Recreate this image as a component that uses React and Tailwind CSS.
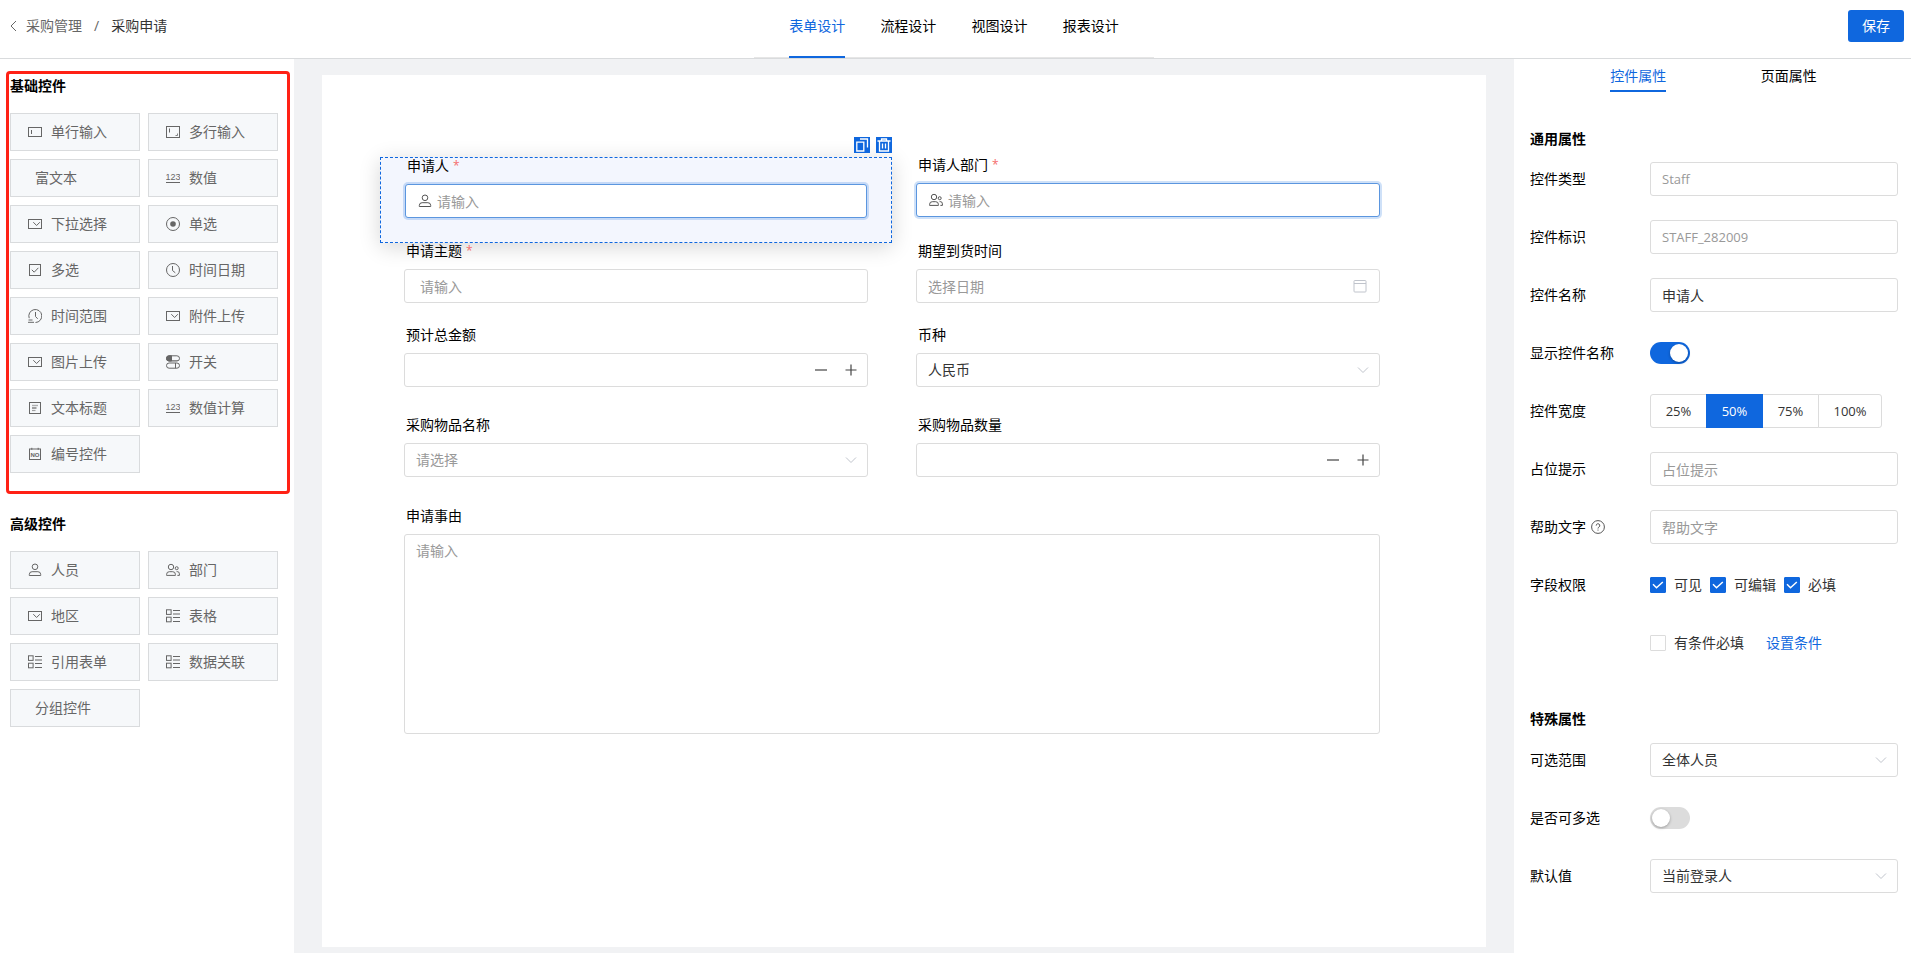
import { useState } from 'react';

const ICONS = {
  single: <><rect x="0.5" y="2.5" width="13" height="9"/><path d="M3.5 5v4"/></>,
  multi: <><rect x="0.5" y="1.5" width="13" height="11"/><path d="M3.5 3.5v4"/><path d="M9.5 10.5h2v-2" strokeWidth="0.8"/></>,
  number: <><text x="7" y="8.5" fontSize="9" textAnchor="middle" fontFamily="Liberation Sans, Arial, sans-serif" fill="currentColor" stroke="none">123</text><path d="M0 11.5h14"/></>,
  select: <><rect x="0.5" y="2.5" width="13" height="9"/><path d="M5.3 5.2l3.3 3.3 3.3-3.3"/></>,
  radio: <><circle cx="7" cy="7" r="6.5"/><circle cx="7" cy="7" r="2.8" fill="currentColor" stroke="none"/></>,
  check: <><rect x="1.5" y="1.5" width="11" height="11"/><path d="M3.8 6.8l2.4 2.4 4.2-4.4"/></>,
  clock: <><circle cx="7" cy="7" r="6.5"/><path d="M6.5 3v4.5l2.8 2.3"/></>,
  range: <><path d="M1.2 9.2A6.5 6.5 0 1 1 7.5 13.5"/><path d="M7.5 3v4.5l2.2 2.3M0.5 11h4M0 13.3h6"/></>,
  toggle: <><rect x="0.5" y="0.8" width="13" height="5.2" rx="2.6"/><path d="M3.1 0.8h2.4v5.2H3.1a2.6 2.6 0 0 1 0-5.2z" fill="currentColor"/><path d="M6 5.5h6" opacity="0.5"/><rect x="0.5" y="8" width="13" height="5.2" rx="2.6"/><path d="M9.5 8v5.2"/></>,
  heading: <><rect x="1.5" y="1.5" width="11" height="11"/><path d="M4 4.5h6" opacity="0.5" strokeWidth="1.4"/><path d="M4 7h4.5" strokeWidth="1.2"/><path d="M4 9.5h3.5" opacity="0.6" strokeWidth="1.2"/></>,
  serial: <><rect x="1.5" y="2" width="11" height="10.5"/><path d="M3.8 0.8v2M10.2 0.8v2"/><text x="7" y="9.5" fontSize="6" fontWeight="bold" textAnchor="middle" fontFamily="Liberation Sans, Arial, sans-serif" fill="currentColor" stroke="none">NO</text></>,
  user: <><circle cx="7" cy="3.8" r="2.8"/><path d="M1.3 12.5v-1a2.8 2.8 0 0 1 2.8-2.8h5.8a2.8 2.8 0 0 1 2.8 2.8v1z"/></>,
  users: <><circle cx="5" cy="4" r="2.7"/><path d="M0.6 12.4v-1a2.7 2.7 0 0 1 2.7-2.7h3.4a2.7 2.7 0 0 1 2.7 2.7v1z"/><circle cx="10.7" cy="5.2" r="1.5"/><path d="M10.6 8.6h0.6a2.2 2.2 0 0 1 2.2 2.2v1.6h-2"/></>,
  table: <><rect x="0.5" y="0.8" width="4.6" height="4.6"/><rect x="0.5" y="8.2" width="4.6" height="4.6"/><path d="M7 1.5h7M7 5h7M7 8.5h7M7 12.5h7"/></>,
  calendar: <><rect x="1" y="1.5" width="12" height="11.5" rx="0.8"/><path d="M1 4.5h12"/></>,
  question: <><circle cx="7" cy="7" r="6.4"/><path d="M5.2 5.6a1.8 1.8 0 1 1 2.7 1.5c-.6.4-.9.7-.9 1.4M7 9.6v1"/></>,
  down: <path d="M2 4.5l5 5 5-5"/>,
  back: <path d="M10 2L5 7l5 5"/>,
  minus: <path d="M1 7h12" strokeWidth="1.2"/>,
  plus: <path d="M1.5 7h11M7 1.5v11" strokeWidth="1.2"/>,
  copy: <path d="M1.8 4.2h7v8.8h-7zM5 1h7.5v8.5" strokeWidth="1.3"/>,
  trash: <path d="M0.5 3h13M4.5 3V1h5v2M2.5 3v10h9V3M5.5 5.5v5M8.5 5.5v5" strokeWidth="1.3"/>,
};

function Icon({ name, className = 'w-3.5 h-3.5' }) {
  return (
    <svg viewBox="0 0 14 14" className={`shrink-0 ${className}`} fill="none" stroke="currentColor" strokeWidth="1" aria-hidden="true">
      {ICONS[name]}
    </svg>
  );
}

const basicControls = [
  ['单行输入', 'single'], ['多行输入', 'multi'],
  ['富文本', null], ['数值', 'number'],
  ['下拉选择', 'select'], ['单选', 'radio'],
  ['多选', 'check'], ['时间日期', 'clock'],
  ['时间范围', 'range'], ['附件上传', 'select'],
  ['图片上传', 'select'], ['开关', 'toggle'],
  ['文本标题', 'heading'], ['数值计算', 'number'],
  ['编号控件', 'serial'],
];

const advancedControls = [
  ['人员', 'user'], ['部门', 'users'],
  ['地区', 'select'], ['表格', 'table'],
  ['引用表单', 'table'], ['数据关联', 'table'],
  ['分组控件', null],
];

const frame = 'w-full h-[34px] rounded-[3px] border border-[#dcdcdc] bg-white placeholder:text-[#999] outline-none';
const box = `${frame} text-sm`;

function ControlGroup({ title, items, className }) {
  return (
    <section className={className}>
      <h2 className="text-sm leading-[22px] font-bold text-black mb-4">{title}</h2>
      <div className="grid grid-cols-[130px_130px] gap-2">
        {items.map(([label, icon]) => (
          <button key={label} type="button" className={`flex items-center gap-[9px] h-[38px] border border-[#d9dbdd] bg-[#f6f8fa] text-sm text-[#666] ${icon ? 'pl-[17px]' : 'pl-6'}`}>
            {icon && <Icon name={icon}/>}
            <span>{label}</span>
          </button>
        ))}
      </div>
    </section>
  );
}

function Header() {
  const tabs = ['表单设计', '流程设计', '视图设计', '报表设计'];
  const [active, setActive] = useState(tabs[0]);

  return (
    <header className="grid grid-cols-[1fr_400px_1fr] h-[59px] pl-1 pr-[7px] border-b border-[#d9dbdd] bg-white text-sm">
      <div className="flex items-center pb-1.5 pl-0.5">
        <button type="button" aria-label="返回" className="mr-1.5 text-[#666]"><Icon name="back"/></button>
        <a href="#manage" className="text-[#666]">采购管理</a>
        <span className="px-3 text-[#666]">/</span>
        <span className="text-[#333]">采购申请</span>
      </div>
      <nav className="flex justify-evenly border-b border-[#e6e6e6]">
        {tabs.map(tab => (
          <button key={tab} type="button" onClick={() => setActive(tab)}
            className={`pb-1 -mb-px border-b-2 ${tab == active ? 'border-[#0f67de] text-[#0f67de]' : 'border-transparent text-black'}`}>
            {tab}
          </button>
        ))}
      </nav>
      <div className="flex justify-end items-start pt-2.5">
        <button type="button" className="w-14 h-8 rounded-[3px] bg-[#0f67de] text-white">保存</button>
      </div>
    </header>
  );
}

function Field({ id, label, required, selected, className = '', children }) {
  return (
    <div className={`relative px-6 ${selected ? 'border border-dashed border-[#0f67de] bg-[#f3f6fe] shadow-[0_4px_20px_rgba(0,0,0,0.16)]' : ''} ${className}`}>
      {selected && (
        <div className="absolute -top-[21px] -right-px flex gap-1.5">
          <button type="button" aria-label="复制" className="flex items-center justify-center w-4 h-4 bg-[#0f67de] text-white"><Icon name="copy"/></button>
          <button type="button" aria-label="删除" className="flex items-center justify-center w-4 h-4 bg-[#0f67de] text-white"><Icon name="trash"/></button>
        </div>
      )}
      <label htmlFor={id} className="flex mb-2.5 pl-0.5 text-sm leading-4 text-black">
        {label}{required && <span className="ml-1 text-xs text-[#f56c6c]">*</span>}
      </label>
      {children}
    </div>
  );
}

function MemberInput({ id, icon }) {
  return (
    <div className="flex items-center gap-1 w-full h-[34px] pl-3 rounded-[3px] border border-[#5b96df] bg-white shadow-[0_0_0_2px_rgba(15,103,222,0.2)] text-[#555]">
      <Icon name={icon}/>
      <input id={id} type="text" placeholder="请输入" className="flex-1 h-full pl-px text-sm text-[#333] placeholder:text-[#999] outline-none"/>
    </div>
  );
}

function NumberInput({ id }) {
  const [value, setValue] = useState('');

  return (
    <div className={`${box} flex items-center pr-px text-[#333]`}>
      <input id={id} type="text" inputMode="numeric" value={value} onChange={e => setValue(e.target.value)} className="flex-1 h-full pl-[11px] outline-none"/>
      <button type="button" aria-label="减少" onClick={() => setValue(Number(value) - 1)} className="flex justify-center w-[30px] text-[#444]"><Icon name="minus"/></button>
      <button type="button" aria-label="增加" onClick={() => setValue(Number(value) + 1)} className="flex justify-center w-[30px] text-[#444]"><Icon name="plus"/></button>
    </div>
  );
}

function Select({ id, options, muted }) {
  return (
    <div className="relative w-full">
      <select id={id} className={`${box} appearance-none pl-[11px] pr-8 ${muted ? 'text-[#999]' : 'text-[#333]'}`}>
        {options.map(option => <option key={option}>{option}</option>)}
      </select>
      <span className="absolute right-2.5 top-2.5 pointer-events-none text-[#c0c4cc]"><Icon name="down"/></span>
    </div>
  );
}

function Canvas() {
  return (
    <main className="flex-1 flex px-7 pt-4 pb-1.5 bg-[#f1f2f4]">
      <form className="flex-1 grid grid-cols-2 content-start pt-[82px] pl-[58px] pr-[82px] bg-white">
        <Field id="applicant" label="申请人" required selected className="h-[86px]"><MemberInput id="applicant" icon="user"/></Field>
        <Field id="dept" label="申请人部门" required><MemberInput id="dept" icon="users"/></Field>
        <Field id="subject" label="申请主题" required className="pb-6">
          <input id="subject" type="text" placeholder="请输入" className={`${box} px-[15px] text-[#333]`}/>
        </Field>
        <Field id="date" label="期望到货时间" className="pb-6">
          <div className={`${box} flex items-center pr-3 text-[#333]`}>
            <input id="date" type="text" placeholder="选择日期" className="flex-1 h-full pl-[11px] placeholder:text-[#999] outline-none"/>
            <span className="text-[#c0c4cc]"><Icon name="calendar"/></span>
          </div>
        </Field>
        <Field id="amount" label="预计总金额" className="pb-[30px]"><NumberInput id="amount"/></Field>
        <Field id="currency" label="币种" className="pb-[30px]"><Select id="currency" options={['人民币']}/></Field>
        <Field id="item" label="采购物品名称" className="pb-[31px]"><Select id="item" options={['请选择']} muted/></Field>
        <Field id="count" label="采购物品数量" className="pb-[31px]"><NumberInput id="count"/></Field>
        <Field id="reason" label="申请事由" className="col-span-2">
          <textarea id="reason" placeholder="请输入" className="block w-full h-[200px] px-[11px] py-1.5 rounded-[3px] border border-[#dcdcdc] text-sm text-[#333] placeholder:text-[#999] resize-none outline-none"/>
        </Field>
      </form>
    </main>
  );
}

function Row({ id, label, help, children }) {
  return (
    <div className="flex items-center h-[34px]">
      <label htmlFor={id} className="flex items-center gap-[5px] w-[120px] shrink-0 text-black">
        {label}
        {help && <span className="text-[#555]"><Icon name="question"/></span>}
      </label>
      <div className="flex-1 flex items-center">{children}</div>
    </div>
  );
}

function Switch({ id, defaultChecked }) {
  return (
    <input id={id} type="checkbox" role="switch" defaultChecked={defaultChecked}
      className="appearance-none flex items-center w-10 h-[22px] px-0.5 rounded-full bg-[#dcdcdc] checked:bg-[#0f67de] checked:justify-end before:block before:w-[18px] before:h-[18px] before:rounded-full before:bg-white before:shadow-[0_1px_3px_rgba(0,0,0,0.3)]"/>
  );
}

function CheckBox({ label, defaultChecked }) {
  return (
    <label className="flex items-center gap-2 mr-2 text-[#333]">
      <span className="grid w-4 h-4">
        <input type="checkbox" defaultChecked={defaultChecked} className="peer col-start-1 row-start-1 appearance-none w-4 h-4 rounded-[1px] border border-[#dcdcdc] bg-white checked:border-[#0f67de] checked:bg-[#0f67de]"/>
        <svg viewBox="0 0 16 16" className="hidden peer-checked:block col-start-1 row-start-1 w-4 h-4 pointer-events-none" fill="none" stroke="white" strokeWidth="1.5">
          <path d="M3 7.3l3.5 3.4L12.8 5"/>
        </svg>
      </span>
      {label}
    </label>
  );
}

function Properties() {
  const [width, setWidth] = useState('50%');

  return (
    <aside className="w-[397px] shrink-0 bg-white text-sm">
      <nav className="flex justify-evenly pt-1.5 pl-0.5">
        <button type="button" className="h-[27px] pb-1 border-b-2 border-[#0f67de] text-[#0f67de]">控件属性</button>
        <button type="button" className="h-[27px] pb-1 border-b-2 border-transparent text-black">页面属性</button>
      </nav>
      <div className="pl-4 pr-[13px] pt-9">
        <h2 className="mb-3 leading-[22px] font-bold text-black">通用属性</h2>
        <div className="flex flex-col gap-6">
          <Row id="type" label="控件类型"><input id="type" type="text" placeholder="Staff" className={`${frame} px-[11px] text-[13px] text-[#333]`}/></Row>
          <Row id="key" label="控件标识"><input id="key" type="text" placeholder="STAFF_282009" className={`${frame} px-[11px] text-[13px] text-[#333]`}/></Row>
          <Row id="name" label="控件名称"><input id="name" type="text" defaultValue="申请人" className={`${box} px-[11px] text-[#333]`}/></Row>
          <Row id="show" label="显示控件名称"><Switch id="show" defaultChecked/></Row>
          <Row label="控件宽度">
            {['25%', '50%', '75%', '100%'].map(item => (
              <button key={item} type="button" onClick={() => setWidth(item)}
                className={`w-[57px] last:w-16 h-[34px] border text-[13px] -ml-px first:ml-0 first:rounded-l-[3px] last:rounded-r-[3px] ${item == width ? 'relative bg-[#0f67de] border-[#0f67de] text-white' : 'bg-white border-[#dcdcdc] text-[#333]'}`}>
                {item}
              </button>
            ))}
          </Row>
          <Row id="placeholder" label="占位提示"><input id="placeholder" type="text" placeholder="占位提示" className={`${box} px-[11px] text-[#333]`}/></Row>
          <Row id="help" label="帮助文字" help><input id="help" type="text" placeholder="帮助文字" className={`${box} px-[11px] text-[#333]`}/></Row>
          <Row label="字段权限">
            <CheckBox label="可见" defaultChecked/>
            <CheckBox label="可编辑" defaultChecked/>
            <CheckBox label="必填" defaultChecked/>
          </Row>
          <Row>
            <CheckBox label="有条件必填"/>
            <a href="#condition" className="ml-3.5 text-[#0f67de]">设置条件</a>
          </Row>
        </div>
        <h2 className="mt-12 mb-[13px] leading-[22px] font-bold text-black">特殊属性</h2>
        <div className="flex flex-col gap-6">
          <Row id="scope" label="可选范围"><Select id="scope" options={['全体人员']}/></Row>
          <Row id="multiple" label="是否可多选"><Switch id="multiple"/></Row>
          <Row id="default" label="默认值"><Select id="default" options={['当前登录人']}/></Row>
        </div>
      </div>
    </aside>
  );
}

function App() {
  return (
    <div className="flex flex-col min-h-screen bg-white font-['Open_Sans','Noto_Sans_CJK_SC',sans-serif]">
      <Header/>
      <div className="flex-1 flex">
        <aside className="w-[294px] shrink-0 pt-3 pl-1.5 pr-1 bg-white">
          <ControlGroup title="基础控件" items={basicControls} className="pt-px pl-px pb-[18px] border-3 border-[#ff2115] rounded-[4px]"/>
          <ControlGroup title="高级控件" items={advancedControls} className="mt-[19px] pl-1"/>
        </aside>
        <Canvas/>
        <Properties/>
      </div>
    </div>
  );
}
export default App;
